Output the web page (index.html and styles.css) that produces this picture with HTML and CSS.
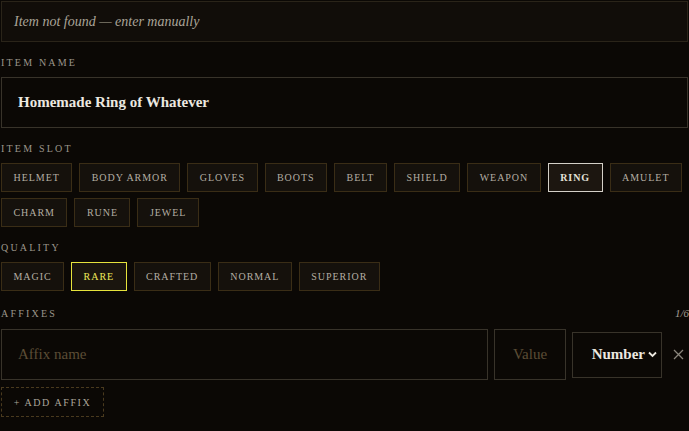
FILE: index.html
```html
<!DOCTYPE html>
<html>
<head>
<meta charset="utf-8">
<link rel="stylesheet" href="styles.css">
</head>
<body>
<div class="page">
  <div class="notice">Item not found — enter manually</div>

  <section class="field">
    <div class="label-row"><span class="label">Item name</span></div>
    <div class="text-input name-input">Homemade Ring of Whatever</div>
  </section>

  <section class="field">
    <div class="label-row"><span class="label">Item slot</span></div>
    <div class="chips">
      <span class="chip">Helmet</span>
      <span class="chip">Body Armor</span>
      <span class="chip">Gloves</span>
      <span class="chip">Boots</span>
      <span class="chip">Belt</span>
      <span class="chip">Shield</span>
      <span class="chip">Weapon</span>
      <span class="chip chip-selected">Ring</span>
      <span class="chip">Amulet</span>
      <span class="chip">Charm</span>
      <span class="chip">Rune</span>
      <span class="chip">Jewel</span>
    </div>
  </section>

  <section class="field">
    <div class="label-row"><span class="label">Quality</span></div>
    <div class="chips">
      <span class="chip">Magic</span>
      <span class="chip chip-rare">Rare</span>
      <span class="chip">Crafted</span>
      <span class="chip">Normal</span>
      <span class="chip">Superior</span>
    </div>
  </section>

  <section class="field affix-field">
    <div class="label-row"><span class="label">Affixes</span><span class="count">1/6</span></div>
    <div class="affix-row">
      <div class="text-input affix-name placeholder">Affix name</div>
      <div class="text-input affix-value placeholder">Value</div>
      <div class="select-box">
        <span class="select-text">Number</span>
        <svg class="chev" width="9" height="7" viewBox="0 0 9 7"><path d="M1 1.5 L4.5 5 L8 1.5" fill="none" stroke="#ece8e0" stroke-width="1.8"/></svg>
      </div>
      <span class="remove">
        <svg width="11" height="11" viewBox="0 0 11 11"><path d="M1 1 L10 10 M10 1 L1 10" stroke="#8a857c" stroke-width="1.3"/></svg>
      </span>
    </div>
    <div class="add-affix">+ Add affix</div>
  </section>
</div>
</body>
</html>
```

FILE: styles.css
```css
html, body {
  margin: 0;
  padding: 0;
  background: #0b0805;
}
body {
  font-family: "Liberation Serif", "DejaVu Serif", serif;
  color: #d8d3c8;
  overflow: hidden;
}
.page {
  width: 687px;
  padding: 1px 0 0 1px;
}
.notice {
  height: 39px;
  border: 1px solid #2a2419;
  background: #110d09;
  color: #aaa498;
  font-style: italic;
  font-size: 14px;
  display: flex;
  align-items: center;
  padding-left: 12px;
}
.field {
  margin-top: 13px;
}
.label-row {
  height: 14px;
  display: flex;
  align-items: center;
  justify-content: space-between;
  margin-bottom: 8px;
}
.label {
  font-size: 10px;
  letter-spacing: 2.2px;
  text-transform: uppercase;
  color: #9c968b;
}
.count {
  font-size: 11px;
  font-style: italic;
  color: #a49e93;
  margin-right: -1px;
}
.text-input {
  border: 1px solid #38332a;
  background: #0b0805;
  box-sizing: border-box;
  display: flex;
  align-items: center;
  padding-left: 16px;
  font-size: 15px;
}
.name-input {
  height: 51px;
  color: #ece8e0;
  font-weight: bold;
}
.chips {
  display: flex;
  flex-wrap: wrap;
  gap: 6px 7px;
}
.chip {
  box-sizing: border-box;
  height: 29px;
  display: inline-flex;
  align-items: center;
  padding: 0 11.5px;
  border: 1px solid #3a2d16;
  background: #15110c;
  color: #b4aea3;
  font-size: 10px;
  letter-spacing: 0.95px;
  text-transform: uppercase;
}
.chip-selected {
  border-color: #d4d0c8;
  background: #1c1610;
  color: #e4e0d8;
  font-weight: bold;
}
.chip-rare {
  border-color: #e6e33c;
  background: #1a150e;
  color: #eeea5a;
}
.affix-field {
  margin-top: 15px;
}
.affix-field .label-row {
  margin-bottom: 9px;
}
.affix-row {
  display: flex;
  align-items: center;
  gap: 6px;
}
.affix-name {
  flex: 1;
  height: 51px;
}
.affix-value {
  width: 72px;
  height: 51px;
  justify-content: center;
  padding-left: 0;
}
.placeholder {
  color: #5c4d35;
}
.select-box {
  box-sizing: border-box;
  width: 90px;
  height: 46px;
  border: 1px solid #38332a;
  display: flex;
  align-items: center;
  justify-content: flex-end;
  padding-right: 4px;
  gap: 3px;
  color: #ece8e0;
  font-weight: bold;
  font-size: 15px;
}
.remove {
  width: 20px;
  display: flex;
  justify-content: center;
}
.add-affix {
  margin-top: 7px;
  width: 103px;
  height: 30px;
  box-sizing: border-box;
  border: 1px dashed #4a3a1e;
  display: flex;
  align-items: center;
  justify-content: center;
  font-size: 10px;
  letter-spacing: 1.6px;
  text-transform: uppercase;
  color: #aca69b;
}
```
